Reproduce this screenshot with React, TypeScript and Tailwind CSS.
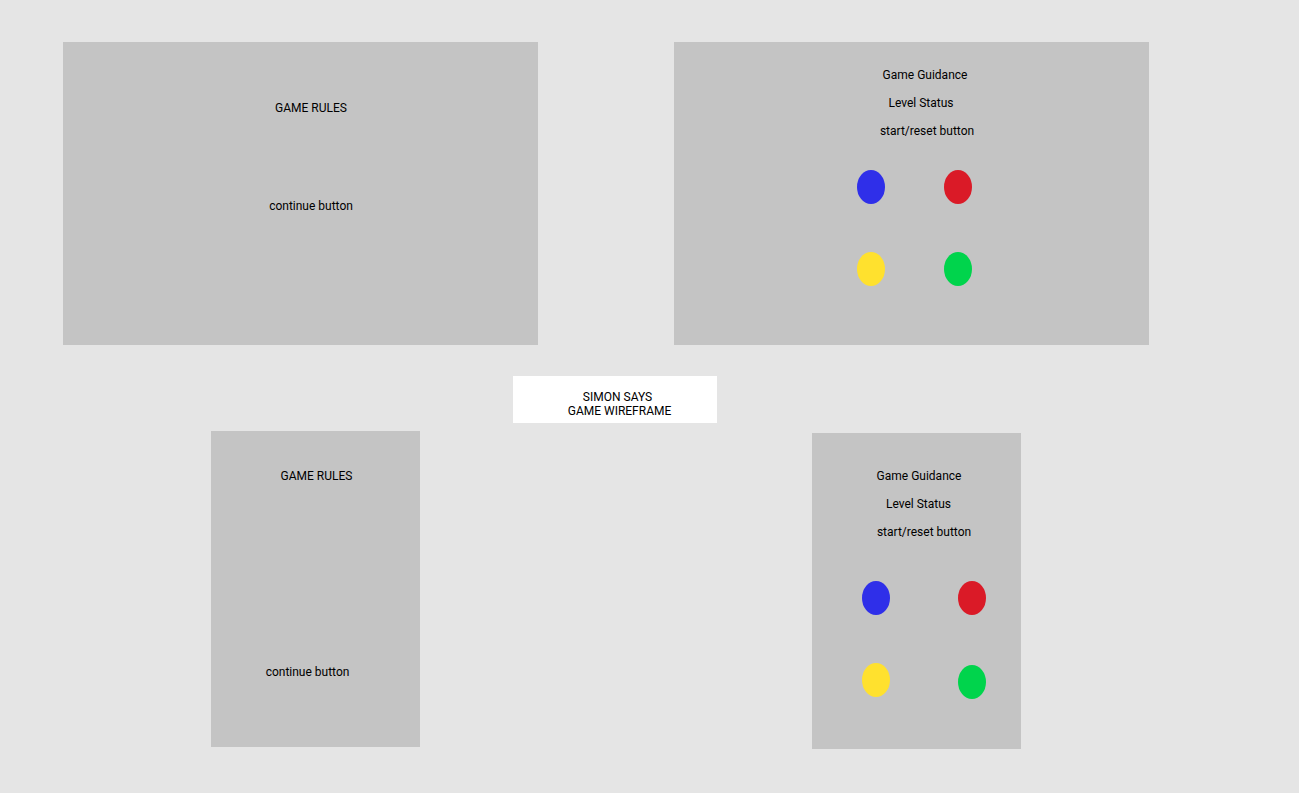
import React from "react";

// simon says wireframe - figma style canvas
const Dot = ({ color, className = "" }: { color: string; className?: string }) => (
    <div className={`w-[28px] h-[34px] rounded-[50%] ${color} ${className}`} />
);

const Line = ({ children, className = "" }: { children: React.ReactNode; className?: string }) => (
    <div className={`text-center text-[12px] leading-[14px] text-black ${className}`}>{children}</div>
);

export default function App() {
    return (
        <div className="relative w-[1299px] h-[793px] bg-[#e5e5e5] overflow-hidden font-['Roboto',sans-serif]">
            {/* desktop - rules */}
            <div className="absolute left-[63px] top-[42px] w-[475px] h-[303px] bg-[#c4c4c4] pt-[59px]">
                <Line className="pl-[21px]">GAME RULES</Line>
                <Line className="pl-[21px] mt-[84px]">continue button</Line>
            </div>

            {/* desktop - game */}
            <div className="absolute left-[674px] top-[42px] w-[475px] h-[303px] bg-[#c4c4c4] pt-[26px]">
                <Line className="pl-[27px]">Game Guidance</Line>
                <Line className="pl-[19px] mt-[14px]">Level Status</Line>
                <Line className="pl-[31px] mt-[14px]">start/reset button</Line>
                <div className="flex gap-[59px] pl-[183px] mt-[32px]">
                    <Dot color="bg-[#2f2fe9]" />
                    <Dot color="bg-[#da1a27]" />
                </div>
                <div className="flex gap-[59px] pl-[183px] mt-[48px]">
                    <Dot color="bg-[#ffe12e]" />
                    <Dot color="bg-[#00d44c]" />
                </div>
            </div>

            {/* title */}
            <div className="absolute left-[513px] top-[376px] w-[204px] h-[47px] bg-white pt-[14px]">
                <Line className="pl-[5px]">SIMON SAYS</Line>
                <Line className="pl-[9px]">GAME WIREFRAME</Line>
            </div>

            {/* mobile - rules */}
            <div className="absolute left-[211px] top-[431px] w-[209px] h-[316px] bg-[#c4c4c4] pt-[38px]">
                <Line className="pl-[2px]">GAME RULES</Line>
                <Line className="pr-[16px] mt-[182px]">continue button</Line>
            </div>

            {/* mobile - game */}
            <div className="absolute left-[812px] top-[433px] w-[209px] h-[316px] bg-[#c4c4c4] pt-[36px]">
                <Line className="pl-[5px]">Game Guidance</Line>
                <Line className="pl-[4px] mt-[14px]">Level Status</Line>
                <Line className="pl-[15px] mt-[14px]">start/reset button</Line>
                <div className="flex gap-[68px] pl-[50px] mt-[42px]">
                    <Dot color="bg-[#2f2fe9]" />
                    <Dot color="bg-[#da1a27]" />
                </div>
                <div className="flex items-start gap-[68px] pl-[50px] mt-[48px]">
                    <Dot color="bg-[#ffe12e]" />
                    <Dot color="bg-[#00d44c]" className="mt-[2px]" />
                </div>
            </div>
        </div>
    );
}
